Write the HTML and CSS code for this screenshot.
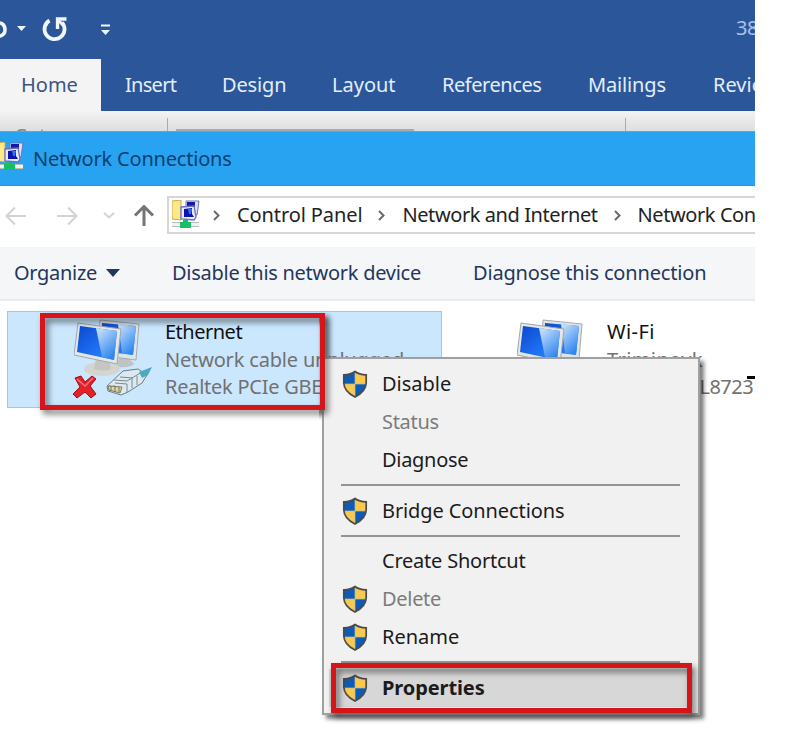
FILE: index.html
```
<!DOCTYPE html>
<html lang="en">
<head>
<meta charset="utf-8">
<title>Network Connections</title>
<link rel="stylesheet" href="styles.css">
</head>
<body>
<svg class="defs" width="0" height="0" aria-hidden="true">
  <defs>
    <linearGradient id="screen" x1="0" y1="0" x2="1" y2="1"><stop offset="0" stop-color="#0a48cf"/><stop offset=".55" stop-color="#1e6df0"/><stop offset="1" stop-color="#2a8cf5"/></linearGradient>
    <linearGradient id="shine" x1="0" y1="0" x2=".6" y2="1"><stop offset="0" stop-color="#d3e8fb"/><stop offset="1" stop-color="#2f86ef"/></linearGradient>
    <symbol id="shield" viewBox="0 0 26 28">
      <path d="M13 1.500C16 4 20 4.800 24.200 4.800V13C24 20 18 24.500 13 27C8 24.500 2 20 1.800 13V4.800C6 4.800 10 4 13 1.500Z" fill="#f9c94f"/>
      <path d="M13 1.500V14H1.800V4.800C6 4.800 10 4 13 1.500ZM13 14H24.200C23.500 20 18 24.500 13 27Z" fill="#0d5bb5"/>
      <path d="M13 3V26M2 14H24" stroke="#b9bfa0" stroke-width=".7"/>
      <path d="M13 1.500C16 4 20 4.800 24.200 4.800V13C24 20 18 24.500 13 27C8 24.500 2 20 1.800 13V4.800C6 4.800 10 4 13 1.500Z" fill="none" stroke="#4b4b49" stroke-width="1.700"/>
    </symbol>
    <symbol id="netfolder" viewBox="0 0 28 28">
      <path d="M0 1L9 0V20L0 19Z" fill="#ffe88a" stroke="#c9a94c"/>
      <path d="M14 1H27L25 15H14Z" fill="#d9e3ff" stroke="#6a74b0"/>
      <path d="M15 2h8v5h-8z" fill="#1818a0"/>
      <path d="M9 7L22 6L24 17L22 20L9 19Z" fill="#e8ecff" stroke="#6a6fc0" stroke-width="1.300"/>
      <path d="M12 9l8-1v6l2 3H12z" fill="#1010b0"/>
      <path d="M16 9h4l-1 5h-2z" fill="#2a76f0"/>
      <path d="M0 22h27v1H0zM0 26h27v1H0z" fill="#b8bdbb"/><path d="M0 23h27v3H0z" fill="#eef3f1"/>
      <path d="M11 20h5v2h3v6H8v-6h3z" fill="#18bd68"/>
    </symbol>
    <symbol id="monitors" viewBox="0 0 66 58">
      <path d="M43 44L46 38H55L57 42Q63 45 57 47Q51 49 43 48Z" fill="#bfc3c5"/>
      <path d="M26 1L65 5L62 41L24 36Z" fill="#dfe4e6" stroke="#a5abad"/>
      <path d="M28 4L62 7L59 36L27 32Z" fill="url(#screen)"/><path d="M44 5L62 7L59 36L48 34Z" fill="url(#shine)"/>
      <ellipse cx="28" cy="50" rx="18" ry="7" fill="#d5d5cf"/><path d="M22 39L35 41L37 50Q30 53 20 50Z" fill="#c5c6c2"/>
      <path d="M4 4L47 10L43 45L0 36Z" fill="#e3e7e8" stroke="#a0a6a8"/>
      <path d="M6 7L43 12L40 41L3 33Z" fill="url(#screen)"/><path d="M22 9L43 12L40 41L28 38Z" fill="url(#shine)"/>
    </symbol>
  </defs>
</svg>
<div class="shot">
  <header class="word-title">
    <svg class="quick" width="130" height="59" viewBox="0 0 130 59">
      <path d="M-4 23Q5 22 5 30Q5 36-4 37" fill="none" stroke="#f2f6ff" stroke-width="3.500"/>
      <path d="M17 26h9l-4.500 5zM101 30h9l-4.500 5z" fill="#f2f6ff"/><path d="M101 24.500h9v2h-9z" fill="#f2f6ff"/>
      <path d="M49.500 20.500A10 10 0 1 0 62 22.500" fill="none" stroke="#f2f6ff" stroke-width="3.800"/>
      <path d="M57.500 29V19H66.500" fill="none" stroke="#f2f6ff" stroke-width="3.300"/><path d="M58 20L64 26" stroke="#f2f6ff" stroke-width="3"/>
    </svg>
    <span class="doc">38</span>
  </header>
  <nav class="tabs">
    <span class="tab active">Home</span><span class="tab t-insert">Insert</span><span class="tab t-design">Design</span><span class="tab">Layout</span><span class="tab t-ref">References</span><span class="tab t-mail">Mailings</span><span class="tab">Review</span>
  </nav>
  <div class="ribbon"><span class="cut">Cut</span><i class="rule"></i><i class="fontbox"></i><i class="rule"></i></div>
  <div class="window-title"><svg width="28" height="28"><use href="#netfolder"/></svg><span class="t-title">Network Connections</span></div>
  <div class="address">
    <svg class="arrows" width="167" height="60" viewBox="0 0 167 60" fill="none">
      <path d="M26 30H7M15 21.500L6.500 30L15 38.500M57 30H76M68 21.500L76.500 30L68 38.500M104 27L109 31.500L114 27" stroke="#d3d3d3" stroke-width="2"/>
      <path d="M144 40V21M135 29.500L144 20.500L153 29.500" stroke="#757575" stroke-width="3"/>
    </svg>
    <div class="path">
      <svg width="28" height="28"><use href="#netfolder"/></svg>
      <svg class="chev" width="10" height="14" viewBox="0 0 10 14"><path d="M2 3L6.500 7.500L2 12"/></svg>
      <span class="crumb t-cp">Control Panel</span>
      <svg class="chev" width="10" height="14" viewBox="0 0 10 14"><path d="M2 3L6.500 7.500L2 12"/></svg>
      <span class="crumb t-ni">Network and Internet</span>
      <svg class="chev" width="10" height="14" viewBox="0 0 10 14"><path d="M2 3L6.500 7.500L2 12"/></svg>
      <span class="crumb t-nc">Network Connections</span>
    </div>
  </div>
  <div class="toolbar"><span class="organize"><span class="t-org">Organize</span><i class="caret"></i></span><span class="disable">Disable this network device</span><span class="t-diag">Diagnose this connection</span></div>
  <main class="list">
    <section class="adapter selected">
      <svg class="adapter-icon" width="84" height="84" viewBox="0 0 84 84">
        <use href="#monitors" x="2" y="1" width="66" height="58"/>
        <path d="M35 68L51 53L66 51L75 57L70 65L56 74L49 77L36 73Z" fill="#dde9f0" stroke="#6c7c86"/>
        <path d="M42 62L55 63L70 54M48 59L61 60M43 65L55 66V74M38 67v6M42 67v7M46 68v7M60 61v9M65 58v9" fill="none" stroke="#788990"/>
        <path d="M36 68L50 69L48 75L37 72Z" fill="#dfd6a5" stroke="#7c7c68"/>
        <path d="M39 68v5M43 68v6M47 69v5" stroke="#77745c"/>
        <path d="M67 54L80 49L76 57L70 60Z" fill="#4ba9c6"/>
        <path d="M3 60L9 58L13 64L20 58L24 61L18 68L24 76L19 80L13 74L5 80L1 76L8 69Z" fill="#e32128" stroke="#a50d14"/>
        <path d="M5 61L13 68L21 60" fill="none" stroke="#f6747a" stroke-width="1.500"/>
      </svg>
      <div class="adapter-text"><b class="t-eth">Ethernet</b><span class="t-cable">Network cable unplugged</span><span class="t-realtek">Realtek PCIe GBE</span></div>
    </section>
    <section class="adapter wifi">
      <svg class="adapter-icon" width="84" height="84" viewBox="0 0 84 84"><use href="#monitors" x="2" y="1" width="66" height="58"/></svg>
      <div class="adapter-text"><b class="t-wifi">Wi-Fi</b><span class="t-tri">Triminovk</span><span class="t-rtl">Realtek RTL8723</span></div>
    </section>
  </main>
</div>
<i class="mark ethernet-mark"></i>
<div class="menu">
  <div class="item"><svg><use href="#shield"/></svg><span>Disable</span></div>
  <div class="item off"><span class="m-tight">Status</span></div>
  <div class="item"><span class="m-tight">Diagnose</span></div>
  <hr>
  <div class="item"><svg><use href="#shield"/></svg><span class="m-bridge">Bridge Connections</span></div>
  <hr>
  <div class="item"><span class="m-create">Create Shortcut</span></div>
  <div class="item off"><svg><use href="#shield"/></svg><span class="m-tight">Delete</span></div>
  <div class="item"><svg><use href="#shield"/></svg><span>Rename</span></div>
  <hr>
  <div class="item hover"><svg><use href="#shield"/></svg><span class="m-prop">Properties</span></div>
</div>
<i class="mark menu-corner"></i>
<i class="mark properties-mark"></i>
<i class="dash"></i>
</body>
</html>
```
FILE: styles.css
```
* { box-sizing: border-box; }
body { margin: 0; width: 800px; height: 748px; overflow: hidden; position: relative; background: #fff; font: 20px/28px "Noto Sans", "Open Sans", sans-serif; color: #222; }
svg { display: block; flex: none; }
.defs { position: absolute; }
.shot { width: 755px; height: 748px; overflow: hidden; white-space: nowrap; }
.word-title { height: 59px; background: #2b579a; display: flex; justify-content: space-between; }
.doc { width: 19px; padding-top: 14px; color: #a9c2eb; letter-spacing: -.5px; }
.tabs { height: 52px; background: #2b579a; display: grid; grid-template-columns: 101px 97px 110px 110px 146px 125px 66px; color: #e4edfc; }
.tab { padding: 12px 0 0 24px; }
.tab.active { background: #f4f4f4; color: #3d5488; padding-left: 21px; }
.t-insert { letter-spacing: -.7px; }
.t-design, .t-mail { letter-spacing: -.15px; }
.t-ref { letter-spacing: -.45px; }
.ribbon { height: 21px; background: linear-gradient(#f3f3f3, #dedede); border-bottom: 1px solid #5caad4; display: flex; overflow: hidden; }
.cut { width: 167px; padding: 11px 0 0 14px; color: #888; }
.rule { width: 1px; margin-top: 7px; background: #aaa; }
.fontbox { width: 238px; height: 2px; margin: 18px 211px 0 8px; background: #a5adb3; }
.window-title { height: 54px; background: #27a3f2; border-bottom: 1px solid #2b93cf; display: flex; align-items: center; color: #073f6f; }
.window-title svg { margin: -5px 9px 0 -4px; }
.t-title { letter-spacing: -.2px; padding-top: 1px; }
.address { height: 61px; display: flex; }
.path { width: 610px; height: 38px; margin-top: 10px; border: 2px solid #d6d6d6; display: flex; align-items: center; flex: none; }
.path > svg:first-child { margin: -2px 12px 0 3px; }
.chev { fill: none; stroke: #6b6b6b; stroke-width: 2; margin-right: 15px; }
.crumb { flex: none; margin-right: 15px; }
.t-cp { letter-spacing: -.1px; }
.t-ni, .t-nc { letter-spacing: -.42px; }
.toolbar { height: 54px; background: #f4f6f8; border-bottom: 2px solid #e9ebee; display: flex; align-items: center; color: #24365c; }
.organize { width: 172px; padding-left: 14px; display: flex; align-items: center; flex: none; }
.t-org { letter-spacing: -.3px; }
.caret { border: 7px solid transparent; border-top: 8px solid #24365c; border-bottom: 0; margin-left: 9px; }
.disable { width: 301px; flex: none; letter-spacing: -.27px; }
.t-diag { letter-spacing: -.17px; }
.list { display: flex; padding: 10px 0 0 7px; }
.adapter { width: 435px; height: 97px; display: flex; flex: none; overflow: hidden; padding-top: 7px; }
.adapter.selected { background: #cbe7fe; border: 1px solid #93cdf3; padding-top: 6px; }
.adapter-icon { margin-left: 64px; }
.wifi .adapter-icon { margin-left: 73px; }
.adapter-text { display: flex; flex-direction: column; margin-left: 9px; color: #717171; }
.wifi .adapter-text { margin-left: 8px; }
.adapter-text b { font-weight: 400; color: #111; }
.adapter-text > * { height: 28px; }
.adapter-text > :nth-child(2) { height: 27px; }
.t-eth { letter-spacing: -.5px; }
.t-cable { letter-spacing: -.18px; }
.t-realtek { letter-spacing: -.25px; }
.t-wifi { letter-spacing: .4px; }
.t-tri { letter-spacing: .4px; }
.t-rtl { letter-spacing: -.55px; }
.menu { position: absolute; left: 322px; top: 357px; width: 378px; height: 358px; border: 2px solid #a0a0a0; background: #f1f1f1; padding: 6px 5px; box-shadow: 4px 4px 4px rgba(0,0,0,.5); }
.item { height: 38px; padding-left: 53px; position: relative; display: flex; align-items: center; color: #1b1b1b; white-space: nowrap; }
.item svg { position: absolute; left: 12px; top: 5px; width: 28px; height: 28px; }
.item.off { color: #7c7c7c; }
.item.hover { background: #d7d7d7; font-weight: 700; }
.m-tight { letter-spacing: -.3px; }
.m-bridge, .m-prop { letter-spacing: -.1px; }
.m-create { letter-spacing: -.22px; }
.menu hr { height: 2px; margin: 5px 13px 5.500px 12px; border: 0; background: #949494; }
.mark { position: absolute; border: 5px solid #d6151b; filter: drop-shadow(3px 4px 3px rgba(0,0,0,.55)); }
.ethernet-mark { left: 40px; top: 313px; width: 285px; height: 97px; }
.menu-corner { left: 40px; top: 313px; width: 285px; height: 97px; clip-path: inset(0 -10px -10px 279px); }
.properties-mark { left: 331px; top: 663px; width: 361px; height: 50px; }
.dash { position: absolute; left: 747px; top: 376px; width: 8px; height: 3px; background: #000; }
```
